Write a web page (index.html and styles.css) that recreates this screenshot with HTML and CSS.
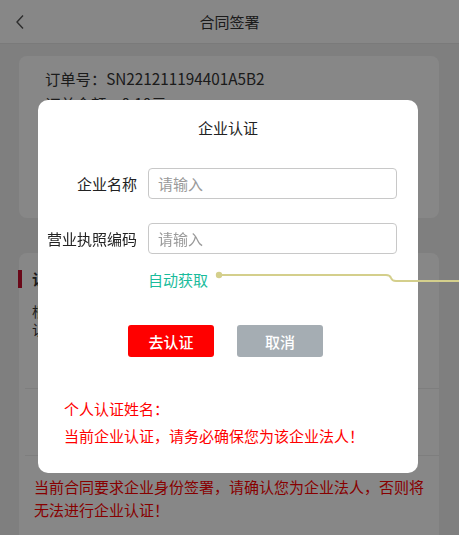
FILE: index.html
```html
<!DOCTYPE html>
<html lang="zh">
<head>
<meta charset="utf-8">
<link rel="stylesheet" href="styles.css">
</head>
<body>
<header class="topbar">
  <svg class="back" width="12" height="16" viewBox="0 0 12 16"><path d="M9 1.5 L3 8 L9 14.5" fill="none" stroke="#555" stroke-width="1.4"/></svg>
  <div class="title">合同签署</div>
</header>
<main class="page">
  <section class="card info">
    <p class="line">订单号：SN221211194401A5B2</p>
    <p class="line">订单金额：0.10元</p>
  </section>
  <section class="card auth">
    <div class="sec-title">认证方式</div>
    <p class="desc">根据合同要求<br>认证后签署</p>
    <div class="row"></div>
    <div class="row"></div>
    <p class="note">当前合同要求企业身份签署，请确认您为企业法人，否则将<br>无法进行企业认证！</p>
  </section>
</main>
<div class="mask"></div>
<div class="dialog">
  <div class="d-title">企业认证</div>
  <div class="field first">
    <label class="label">企业名称</label>
    <input class="input" placeholder="请输入">
  </div>
  <div class="field">
    <label class="label">营业执照编码</label>
    <input class="input" placeholder="请输入">
  </div>
  <div class="auto">自动获取</div>
  <div class="btns">
    <button class="btn ok">去认证</button>
    <button class="btn cancel">取消</button>
  </div>
  <div class="warn">
    <p>个人认证姓名：</p>
    <p>当前企业认证，请务必确保您为该企业法人！</p>
  </div>
</div>
<svg class="leader" width="459" height="535" viewBox="0 0 459 535">
  <path d="M219 275 H386 Q390 275 391 278 Q392 281 396 281 H459" fill="none" stroke="#d4cf8c" stroke-width="2"/>
  <circle cx="219" cy="275" r="3.2" fill="#d4cf8c"/>
</svg>
</body>
</html>
```
FILE: styles.css
```css
* { box-sizing: border-box; }
html, body { margin: 0; padding: 0; }
body {
  width: 459px;
  height: 535px;
  overflow: hidden;
  background: #f0f0f0;
  font-family: "Noto Sans CJK SC", "Noto Sans", sans-serif;
  color: #333;
}
p { margin: 0; }
.topbar {
  height: 44px;
  background: #fff;
  border-bottom: 1px solid #e6e6e6;
  display: flex;
  align-items: center;
  justify-content: center;
  position: relative;
}
.back { position: absolute; left: 14px; top: 14px; }
.title { font-size: 15px; color: #333; }
.page { padding: 12px 20px 0 19px; }
.card { background: #fff; border-radius: 8px; }
.info { height: 162px; padding: 10px 26px; }
.line { font-size: 15.3px; line-height: 25px; color: #333; }
.auth { margin-top: 35px; height: 290px; padding-top: 17px; }
.sec-title {
  border-left: 4px solid #c8102e;
  margin-left: -1px;
  padding-left: 10px;
  font-size: 15px;
  line-height: 18px;
  font-weight: bold;
}
.desc { padding: 14px 13px 0; font-size: 14px; line-height: 18px; color: #333; height: 100px; }
.row { margin-left: 6px; border-top: 1px solid #eee; height: 67px; }
.row + .row { height: 18px; }
.note { padding: 0 0 0 15px; font-size: 15px; line-height: 23px; color: #ff0000; margin-top: 2px; white-space: nowrap; }
.mask {
  position: fixed;
  inset: 0;
  background: rgba(0, 0, 0, 0.47);
}
.dialog {
  position: fixed;
  top: 100px;
  left: 38px;
  width: 380px;
  height: 373px;
  background: #fff;
  border-radius: 10px;
  padding-top: 17px;
}
.d-title { text-align: center; font-size: 15px; line-height: 22px; color: #222; }
.field { display: flex; align-items: center; gap: 11px; margin-top: 24px; }
.field.first { margin-top: 29px; }
.label { width: 99px; text-align: right; font-size: 15px; color: #222; }
.input {
  width: 249px;
  height: 31px;
  border: 1px solid #c8c8c8;
  border-radius: 4px;
  padding: 0 9px;
  font: 15px "Noto Sans CJK SC", sans-serif;
  outline: none;
}
.input::placeholder { color: #9a9a9a; }
.auto { margin-top: 15px; padding-left: 110px; font-size: 15px; line-height: 22px; color: #1abc9c; }
.btns { display: flex; gap: 23px; padding-left: 90px; margin-top: 34px; }
.btn {
  width: 86px;
  height: 32px;
  border: none;
  border-radius: 3px;
  color: #fff;
  font: 500 15px "Noto Sans CJK SC", sans-serif;
}
.ok { background: #ff0000; }
.cancel { background: #a5adb3; }
.warn { margin-top: 38px; padding-left: 26px; font-size: 15px; line-height: 27px; color: #ff0000; }
.leader { position: fixed; left: 0; top: 0; pointer-events: none; }
```
